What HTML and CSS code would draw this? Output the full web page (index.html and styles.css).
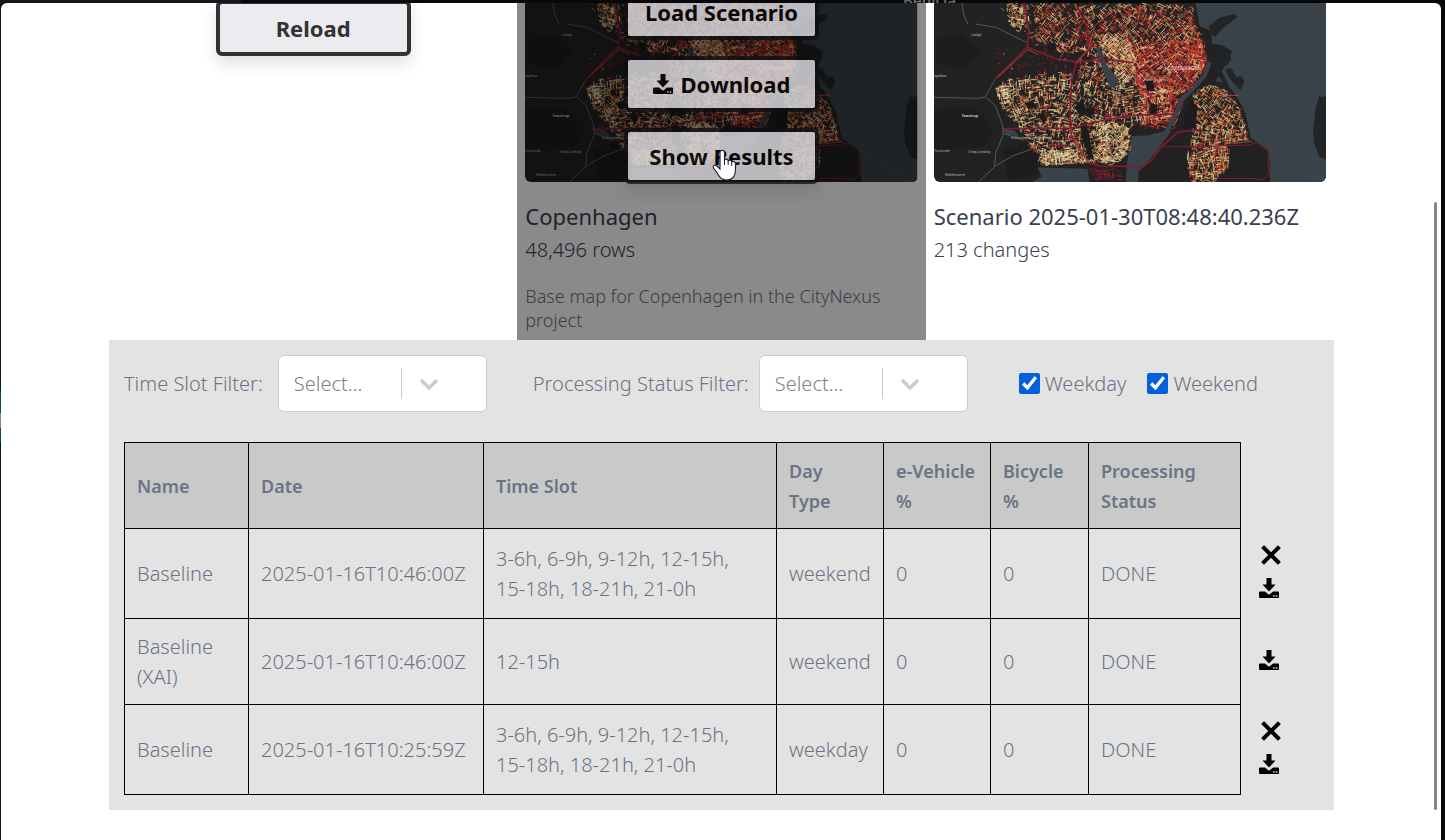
FILE: index.html
```html
<!DOCTYPE html>
<html lang="en">
<head>
<meta charset="utf-8">
<title>CityNexus scenarios</title>
<link rel="stylesheet" href="styles.css">
</head>
<body>
<svg class="defs" aria-hidden="true">
  <symbol id="icon-download" viewBox="0 0 20 20">
    <path d="M7.500 0h5v6.500h4L10 13.500 3.500 6.500h4z"/>
    <path d="M1 13.500h5l2.600 2.300a2 2 0 0 0 2.800 0L14 13.500h5a1 1 0 0 1 1 1V19a1 1 0 0 1-1 1H1a1 1 0 0 1-1-1v-4.500a1 1 0 0 1 1-1zM14 17.200v1.500h1.500v-1.500zm2.800 0v1.500h1.500v-1.500z" fill-rule="evenodd"/>
  </symbol>
  <symbol id="icon-close" viewBox="0 0 20 20">
    <path d="M3 3l14 14M17 3L3 17" fill="none" stroke="currentColor" stroke-width="4" stroke-linecap="square"/>
  </symbol>
  <symbol id="icon-chevron" viewBox="0 0 20 20">
    <path d="M3 8l7 7 7-7" fill="none" stroke="currentColor" stroke-width="3.500" stroke-linecap="round"/>
  </symbol>
  <symbol id="city-map" viewBox="24 9 1179 537" preserveAspectRatio="none">
    <rect x="24" y="9" width="1179" height="537" fill="#222"/>
    <g fill="#1d1d1e">
      <path d="M24 330l120-10 60 60-30 60-150 20zM30 120l80-20 60 50-50 60-90-20z"/>
      <path d="M230 450l80-30 60 90-120 36z"/>
    </g>
    <g fill="#3a4249">
      <path d="M810 9h393v537h-169l-2-80-6-18-36-26-14-8-16-74-20-40-20-30-20-20-30-6 30-50 20-40-30-18-30-4-4-40-34-14z"/>
      <path d="M618 408l50-2 46-12 24-2-40 54-40 50-20 50H600l4-60zM335 502l60 2 90 2 6 40H318l30-16zM225 385l40 5 15 20-40-8z"/>
    </g>
    <g fill="#222527">
      <path d="M850 78l30-24 44-12 12 8-46 36-20 24-14-8zM868 158h48v22l-14 18-20-4zM898 206l18-2 18 28 14-4 9 16-12 26-16-14-18-22zM868 210l14-10 60 120 18 20-4 24-30-60zM1182 284l6 8 15-4v190l-20-6-16-40-4-40 8-70 8-22z"/>
      <path d="M652 500l60-60h250l65 12 2 94H637l2-30z" fill="#212121"/>
    </g>
    <g fill="none" stroke="#55595d" stroke-width="3">
      <path d="M24 292l130 3 24-4 30-54M178 290l30 26 22 60 2 30-22 50-4 44-48 46M208 498l52-30 66-24M232 400l60 20M108 9l4 30 14 34M150 72l60 10 94 46"/>
      <path d="M1035 450l80 60 60 36M1110 490l80 54" stroke-width="1"/>
    </g>
    <g id="streets" fill="none"></g>
    <path d="M852 186l-14 40-36 40-34 34-20 50-34 60-50 46" fill="none" stroke="#3a4249" stroke-width="13"/>
    <path d="M510 143l12 2 26 60 28 30v24l-22 4-26-62z" fill="#39424a"/>
    <g fill="#1d1b1b">
      <path d="M446 320l26-14 14 30-22 16zM482 326l24-6v24l-20 4zM464 372l18-6 12 60 10 54-14-8-22-60zM776 345l22-44 18 20-6 64-34 4zM660 244l22-4 4 30-22 4zM676 308l20 8-4 32-20-6zM500 60l16-4 4 30-14 6zM362 132l26-4 4 22-24 4zM296 310l26-8 6 20-20 8zM340 350l10-20 12 24-8 22z"/>
    </g>
    <g fill="none" stroke="#85192f" stroke-width="5">
      <path d="M208 237l96-96 44 18 50 20 54 6 40-40-10-70-30-60M452 186l-14 54-6 100 6 70 30 50 24 30 30 8 130 2 26-20 30-40 50-44 70-8M304 141l6-50-16-82M232 386l204-2 100-24 80-14 120-4M368 438l60-2M452 186l90-8 80 10"/>
      <path d="M710 440l120 0 140-5 24-8 34 24 2 70-16 18-44-4-90 0" stroke-width="3"/>
    </g>
    <g fill="none" stroke="#e05a36" stroke-width="2">
      <path d="M216 232l90-84 32 16M400 180l46-80 40-50M452 190l36-44 20-70 60-50 60 50M436 386l20 56 36 48M536 24l76 70 30 80 60 60 100 30M860 286l80 0M870 546l20-60 10-60 30 4 50-6"/>
    </g>
    <g class="map-label">
      <text x="135" y="108">Ledøje</text>
      <text x="24" y="230">ngeløse</text>
      <text x="107" y="350" class="map-town">Taastrup</text>
      <text x="24" y="457">Torslunde</text>
      <text x="128" y="460">Ishøj Landsby</text>
      <text x="255" y="418">Vallensbæk Landsby</text>
      <text x="57" y="527">Hedehusene</text>
      <text x="655" y="243">Frederiksberg</text>
      <text x="725" y="209" class="map-city">COPENHAGEN</text>
    </g>
  </symbol>
</svg>

<div class="behind" aria-hidden="true"><span>Benicia</span></div>

<main class="modal">
  <section class="cards">
    <div class="card-new">
      <button type="button" class="btn">Reload</button>
    </div>
    <article class="card">
      <svg class="thumb" role="img" aria-label="Map of Copenhagen"><use href="#city-map"/></svg>
      <h2>Copenhagen</h2>
      <p class="meta">48,496 rows</p>
      <p class="desc">Base map for Copenhagen in the CityNexus project</p>
      <div class="overlay">
        <button type="button" class="btn">Load Scenario</button>
        <button type="button" class="btn"><svg class="icon"><use href="#icon-download"/></svg>Download</button>
        <button type="button" class="btn">Show Results</button>
        <svg class="cursor" viewBox="0 0 26 32" aria-hidden="true">
          <path d="M8 3.500c0-3 4.500-3 4.500 0V11c1-1.500 3.500-1 3.700.8 1-1.200 3.300-.7 3.500 1 1.300-1 3.800-.3 3.800 2V21c0 6-3 10-9 10-5 0-7-2.500-9-6.500L1.500 19c-1-2.500 1.800-4 3.500-2l3 3z" fill="#fff" stroke="#223" stroke-width="1.200"/>
          <path d="M12.500 11v5M16.200 12v4M19.700 13v4" stroke="#223" fill="none"/>
        </svg>
      </div>
    </article>
    <article class="card">
      <svg class="thumb" role="img" aria-label="Map of the scenario"><use href="#city-map"/></svg>
      <h2>Scenario 2025-01-30T08:48:40.236Z</h2>
      <p class="meta">213 changes</p>
    </article>
  </section>

  <section class="results">
    <div class="filters">
      <div class="field">
        <label for="slot">Time Slot Filter:</label>
        <span class="select"><select id="slot"><option>Select...</option></select><svg class="chevron"><use href="#icon-chevron"/></svg></span>
      </div>
      <div class="field field-status">
        <label for="status">Processing Status Filter:</label>
        <span class="select"><select id="status"><option>Select...</option></select><svg class="chevron"><use href="#icon-chevron"/></svg></span>
      </div>
      <div class="checks">
        <label><input type="checkbox" checked>Weekday</label>
        <label><input type="checkbox" checked>Weekend</label>
      </div>
    </div>
    <table>
      <colgroup><col class="c-name"><col class="c-date"><col class="c-slot"><col class="c-day"><col class="c-day"><col class="c-bike"><col class="c-status"><col></colgroup>
      <thead>
        <tr><th>Name</th><th>Date</th><th>Time Slot</th><th>Day<br>Type</th><th>e-Vehicle<br>%</th><th>Bicycle<br>%</th><th>Processing Status</th><td class="actions"></td></tr>
      </thead>
      <tbody>
        <tr><td>Baseline</td><td>2025-01-16T10:46:00Z</td><td>3-6h, 6-9h, 9-12h, 12-15h,<br>15-18h, 18-21h, 21-0h</td><td>weekend</td><td>0</td><td>0</td><td>DONE</td>
          <td class="actions"><button type="button" class="close" aria-label="Remove"><svg><use href="#icon-close"/></svg></button><button type="button" aria-label="Download"><svg><use href="#icon-download"/></svg></button></td></tr>
        <tr><td>Baseline (XAI)</td><td>2025-01-16T10:46:00Z</td><td>12-15h</td><td>weekend</td><td>0</td><td>0</td><td>DONE</td>
          <td class="actions"><button type="button" aria-label="Download"><svg><use href="#icon-download"/></svg></button></td></tr>
        <tr><td>Baseline</td><td>2025-01-16T10:25:59Z</td><td>3-6h, 6-9h, 9-12h, 12-15h,<br>15-18h, 18-21h, 21-0h</td><td>weekday</td><td>0</td><td>0</td><td>DONE</td>
          <td class="actions"><button type="button" class="close" aria-label="Remove"><svg><use href="#icon-close"/></svg></button><button type="button" aria-label="Download"><svg><use href="#icon-download"/></svg></button></td></tr>
      </tbody>
    </table>
  </section>
  <div class="scroll-thumb"></div>
</main>
<script src="map.js"></script>
</body>
</html>
```
FILE: map.js
```js
// Fills the city map with a street network, district by district.
let seed = 11;
function rand() {
  seed = (seed * 1664525 + 1013904223) % 4294967296;
  return seed / 4294967296;
}

const PALE = "#e6dba4", SAND = "#c29a5c", ORANGE = "#e8843f", RED = "#c2262c", WINE = "#861a2c";
const west = [[205,270],[235,238],[300,226],[430,210],[450,240],[600,240],[735,270],[745,345],[700,370],[620,385],[615,460],[560,496],[500,492],[345,500],[310,440],[270,378],[232,336]];
const north = [[325,9],[804,9],[812,70],[836,150],[846,190],[800,270],[735,300],[600,250],[450,240],[470,160],[400,160],[325,120]];
const corner = [[236,9],[310,9],[310,70],[280,100],[245,70]];
const amager = [[800,280],[846,250],[915,275],[945,325],[975,420],[912,432],[914,505],[865,546],[796,546],[780,490],[800,400]];
const northWest = [[215,20],[330,9],[440,60],[330,140]];
const sparse = [[200,150],[440,140],[440,230],[220,230]];

// polygon, street count, grid angle, colour weights
const districts = [
  [west, 2300, 0.08, [[PALE,5],[SAND,5],[ORANGE,2],[RED,2],[WINE,2]]],
  [north, 2700, 0.7, [[PALE,3],[SAND,4],[ORANGE,3],[RED,4],[WINE,4]]],
  [[[600,130],[840,110],[846,200],[790,280],[745,390],[640,385],[640,300]], 1500, 0.4, [[SAND,1],[ORANGE,3],[RED,6],[WINE,7]]],
  [[[760,70],[830,80],[848,190],[815,240],[790,180]], 120, 0.4, [[ORANGE,4],[SAND,2],[RED,1]]],
  [[[500,100],[600,100],[640,170],[620,250],[575,240],[530,150]], 420, 0.7, [[PALE,5],[SAND,6],[ORANGE,2]]],
  [[[520,370],[600,365],[618,400],[605,470],[560,495],[500,485]], 320, 0.9, [[PALE,5],[SAND,5]]],
  [[[330,445],[480,450],[490,490],[345,498]], 220, 0.1, [[PALE,6],[SAND,4],[ORANGE,1]]],
  [[[205,265],[250,245],[260,320],[225,310]], 70, 0.1, [[PALE,6],[SAND,3]]],
  [amager, 1050, 0.25, [[PALE,3],[SAND,4],[ORANGE,4],[RED,3]]],
  [corner, 130, 0.2, [[PALE,3],[SAND,3],[ORANGE,2]]],
  [northWest, 90, 1.0, [[ORANGE,2],[RED,2],[SAND,2]]],
  [sparse, 60, 0.1, [[WINE,5],[RED,2],[ORANGE,1]]],
  [[[490,503],[600,506],[600,540],[500,540]], 70, 0.05, [[WINE,4],[RED,1]]]
];

function inside(poly, x, y) {
  let hit = false;
  for (let i = 0, j = poly.length - 1; i < poly.length; j = i++) {
    const [xi, yi] = poly[i], [xj, yj] = poly[j];
    if ((yi > y) !== (yj > y) && x < (xj - xi) * (y - yi) / (yj - yi) + xi) hit = !hit;
  }
  return hit;
}

function pick(weights) {
  let r = rand() * weights.reduce((sum, w) => sum + w[1], 0);
  for (const [colour, w] of weights) if ((r -= w) < 0) return colour;
  return weights[0][0];
}

const paths = new Map();
for (const [poly, count, angle, weights] of districts) {
  const xs = poly.map(p => p[0]), ys = poly.map(p => p[1]);
  const x0 = Math.min(...xs), y0 = Math.min(...ys);
  const w = Math.max(...xs) - x0, h = Math.max(...ys) - y0;
  let drawn = 0;
  while (drawn < count) {
    const x = x0 + rand() * w, y = y0 + rand() * h;
    if (!inside(poly, x, y)) continue;
    const turn = angle + 0.5 * Math.sin(x / 60) * Math.cos(y / 50) + (rand() < 0.5 ? Math.PI / 2 : 0);
    const len = 4 + rand() * 14;
    const dx = Math.cos(turn) * len, dy = Math.sin(turn) * len;
    drawn++;
    if (!inside(poly, x + dx, y + dy)) continue;
    const colour = pick(weights);
    const d = `M${x.toFixed(1)} ${y.toFixed(1)}l${dx.toFixed(1)} ${dy.toFixed(1)}`;
    paths.set(colour, (paths.get(colour) || "") + d);
  }
}

const group = document.getElementById("streets");
for (const colour of [SAND, WINE, ORANGE, RED, PALE]) {
  const path = document.createElementNS("http://www.w3.org/2000/svg", "path");
  path.setAttribute("d", paths.get(colour));
  path.setAttribute("stroke", colour);
  path.setAttribute("stroke-width", "2.2");
  group.append(path);
}
```
FILE: styles.css
```css
* {
  box-sizing: border-box;
}

body {
  margin: 0;
  min-height: 100vh;
  padding: 3px 4px 0 1px;
  background: linear-gradient(90deg, #11191f 241px, #08080a 241px);
  font-family: "Noto Sans", "Open Sans", sans-serif;
  font-size: 20px;
  font-weight: 300;
  line-height: 30px;
  color: #6a7485;
  overflow: hidden;
}

body::before {
  content: "";
  position: absolute;
  left: 0;
  top: 391px;
  width: 1px;
  height: 51px;
  background: linear-gradient(#00553d 22px, #888 22px 37px, #00553d 37px);
}

.defs {
  position: absolute;
  width: 0;
  height: 0;
}

.behind {
  position: absolute;
  top: 0;
  left: 903px;
  height: 8px;
  overflow: hidden;
  color: #66696d;
  font-size: 15px;
  font-weight: 600;
  line-height: 0;
}

.modal {
  position: relative;
  min-height: calc(100vh - 3px);
  padding: 0 107px 30px 108px;
  border-radius: 6px 6px 0 0;
  background: #fff;
  overflow: hidden;
}

.cards {
  display: grid;
  grid-template-columns: repeat(3, 1fr);
}

.card-new {
  display: flex;
  justify-content: center;
  align-items: flex-start;
  margin-top: -3px;
}

.card {
  position: relative;
  min-height: 337px;
  padding: 0 8px 8px;
}

.thumb {
  display: block;
  width: 100%;
  height: 179px;
  border-radius: 0 0 6px 6px;
}

.map-label {
  fill: #a5a8ab;
  font-family: "Noto Sans", sans-serif;
  font-size: 10px;
  font-weight: 500;
}

.map-town {
  fill: #e8e8e8;
  font-size: 12px;
}

.map-city {
  fill: #e6d4d4;
  font-size: 15px;
}

.card h2 {
  margin: 19px 0 0;
  font-size: 22px;
  font-weight: 400;
  line-height: 30px;
  color: #3a414e;
  white-space: nowrap;
}

.card p {
  margin: 0;
}

.card .meta {
  margin-top: 4px;
  color: #3a414e;
}

.card .desc {
  margin-top: 19px;
  font-size: 18px;
  line-height: 24px;
}

.overlay {
  position: absolute;
  inset: 0;
  display: flex;
  flex-direction: column;
  align-items: center;
  gap: 16px;
  background: rgb(0 0 0 / 46%);
}

.overlay .btn {
  border-color: #0d0e10;
  opacity: 0.77;
  color: #000;
}

.overlay .btn:first-child {
  margin-top: -19px;
}

.btn {
  display: flex;
  flex: none;
  justify-content: center;
  align-items: center;
  gap: 8px;
  width: 195px;
  height: 56px;
  padding: 0;
  border: 4px solid #303234;
  border-radius: 6px;
  background: #ecebf0;
  box-shadow: 0 8px 16px rgb(0 0 0 / 12%);
  font-family: "Noto Sans", sans-serif;
  font-size: 22px;
  font-weight: 700;
  color: #333;
}

.icon {
  width: 20px;
  height: 20px;
}

.cursor {
  position: absolute;
  left: 195px;
  top: 146px;
  width: 26px;
  height: 32px;
}

.results {
  padding: 15px;
  background: #e3e3e3;
}

.filters {
  display: flex;
  align-items: center;
}

.field {
  display: flex;
  align-items: center;
  gap: 15px;
  margin-right: 46px;
}

.field-status {
  gap: 10px;
  margin-right: 51px;
}

.select {
  position: relative;
  display: block;
  width: 209px;
}

.select select {
  appearance: none;
  width: 100%;
  height: 57px;
  padding: 0 15px;
  border: 1px solid #ccc;
  border-radius: 6px;
  background: #fff;
  font: inherit;
  color: #808080;
}

.select::after {
  content: "";
  position: absolute;
  left: 123px;
  top: 13px;
  width: 1px;
  height: 31px;
  background: #ccc;
}

.chevron {
  position: absolute;
  left: 141px;
  top: 18px;
  width: 20px;
  height: 20px;
  color: #ccc;
  pointer-events: none;
}

.checks {
  display: flex;
  gap: 21px;
}

.checks label {
  display: flex;
  align-items: center;
  gap: 5px;
}

.checks input {
  width: 21px;
  height: 21px;
  margin: 0;
  accent-color: #0060df;
}

table {
  width: 100%;
  margin-top: 30px;
  border-collapse: collapse;
  table-layout: fixed;
}

.c-name { width: 124px; }
.c-date { width: 235px; }
.c-slot { width: 293px; }
.c-day { width: 107px; }
.c-bike { width: 98px; }
.c-status { width: 152px; }

th,
td {
  height: 86px;
  padding: 12px;
  border: 1px solid #000;
  text-align: left;
}

th {
  background: #c9c9c9;
  font-size: 18px;
  font-weight: 600;
}

.actions {
  padding: 0 0 4px 18px;
  border: 0;
}

tr:has(.close) td {
  height: 90px;
}

.actions button {
  display: block;
  padding: 0;
  border: 0;
  background: none;
  color: #000;
}

.actions button svg {
  display: block;
  width: 20px;
  height: 20px;
}

.actions .close {
  margin: 0 0 13px 2px;
}

.scroll-thumb {
  position: absolute;
  top: 199px;
  right: 4px;
  width: 3px;
  height: 608px;
  border-radius: 2px;
  background: #858585;
}
```
